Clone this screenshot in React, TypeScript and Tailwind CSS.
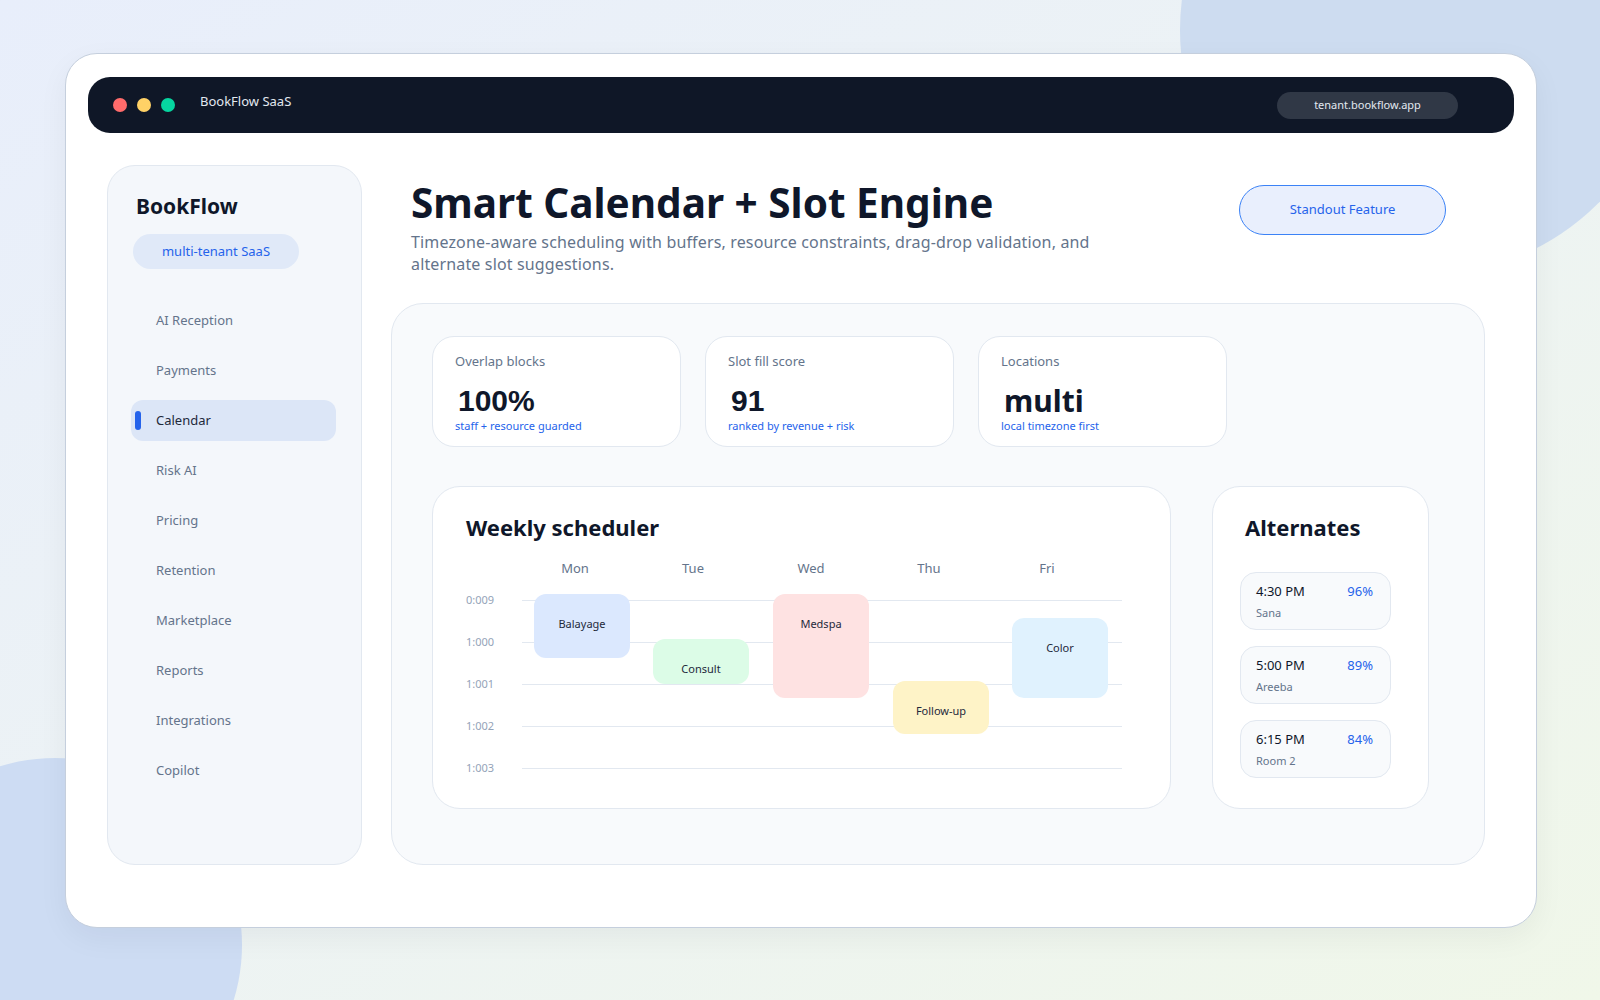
import React from 'react';

const navItems = [
  'AI Reception',
  'Payments',
  'Calendar',
  'Risk AI',
  'Pricing',
  'Retention',
  'Marketplace',
  'Reports',
  'Integrations',
  'Copilot',
];

const stats = [
  { label: 'Overlap blocks', value: '100%', note: 'staff + resource guarded', numeric: true },
  { label: 'Slot fill score', value: '91', note: 'ranked by revenue + risk', numeric: true },
  { label: 'Locations', value: 'multi', note: 'local timezone first', numeric: false },
];

const days = ['Mon', 'Tue', 'Wed', 'Thu', 'Fri'];
const hours = ['0:009', '1:000', '1:001', '1:002', '1:003'];

// event blocks sit on the grid canvas, offsets in px from the first column / first row
const events = [
  { name: 'Balayage', left: 12, top: 15, height: 64, color: 'bg-[#dbe8fe]' },
  { name: 'Consult', left: 131, top: 60, height: 45, color: 'bg-[#dcfce7]' },
  { name: 'Medspa', left: 251, top: 15, height: 104, color: 'bg-[#fee2e2]' },
  { name: 'Follow-up', left: 371, top: 102, height: 53, color: 'bg-[#fef3c7]' },
  { name: 'Color', left: 490, top: 39, height: 80, color: 'bg-[#e0f2fe]' },
];

const alternates = [
  { time: '4:30 PM', score: '96%', who: 'Sana' },
  { time: '5:00 PM', score: '89%', who: 'Areeba' },
  { time: '6:15 PM', score: '84%', who: 'Room 2' },
];

const Sidebar = () => (
  <aside className="w-[255px] shrink-0 rounded-[28px] border border-[#e2e8f0] bg-[#f4f7fb] pt-[26px] px-[23px]">
    <p className="pl-[5px] text-[21px] leading-[28px] font-bold text-[#0f172a]">BookFlow</p>
    <div className="mt-[14px] ml-[2px] flex h-[35px] w-[166px] items-center justify-center rounded-full bg-[#e0e9f8] text-[13px] text-[#2563eb]">
      multi-tenant SaaS
    </div>
    <nav className="mt-[31px] flex flex-col gap-[9px]">
      {navItems.map((item) => {
        const active = item === 'Calendar';
        return (
          <div
            key={item}
            className={`relative flex h-[41px] w-[205px] items-center rounded-[12px] pl-[25px] text-[13px] ${
              active ? 'bg-[#dce6f7] text-[#1e293b]' : 'text-[#64748b]'
            }`}
          >
            {active && <span className="absolute left-[4px] top-[11px] h-[19px] w-[6px] rounded-full bg-[#2563eb]" />}
            {item}
          </div>
        );
      })}
    </nav>
  </aside>
);

const StatCard = ({ label, value, note, numeric }: (typeof stats)[number]) => (
  <div className="h-[111px] w-[249px] rounded-[22px] border border-[#e2e8f0] bg-white px-[22px] pt-[15px]">
    <p className="text-[13px] leading-[18px] text-[#64748b]">{label}</p>
    <p
      className={`mt-[15px] ml-[3px] text-[30px] leading-[32px] font-bold text-[#0f172a] ${
        numeric ? "font-['Liberation_Sans',sans-serif]" : ''
      }`}
    >
      {value}
    </p>
    <p className="mt-[2px] text-[11px] leading-[14px] text-[#2563eb]">{note}</p>
  </div>
);

const WeeklyScheduler = () => (
  <div className="h-[323px] w-[739px] rounded-[28px] border border-[#e2e8f0] bg-white pt-[26px] pl-[33px]">
    <h3 className="text-[22px] leading-[28px] font-bold text-[#0f172a]">Weekly scheduler</h3>
    <div className="mt-[18px] ml-[50px] flex">
      {days.map((d) => (
        <span key={d} className="w-[118px] text-center text-[13px] leading-[18px] text-[#64748b]">
          {d}
        </span>
      ))}
    </div>
    <div className="relative mt-[2px]">
      {hours.map((h) => (
        <div key={h} className="flex h-[42px] items-center">
          <span className="w-[56px] text-[11px] text-[#94a3b8]">{h}</span>
          <div className="h-px w-[600px] bg-[#e2e8f0]" />
        </div>
      ))}
      <div className="absolute left-[56px] top-0">
        {events.map((e) => (
          <div
            key={e.name}
            className={`absolute w-[96px] rounded-[12px] pt-[22px] text-center text-[11px] leading-[16px] text-[#1e293b] ${e.color}`}
            style={{ left: e.left, top: e.top, height: e.height }}
          >
            {e.name}
          </div>
        ))}
      </div>
    </div>
  </div>
);

const Alternates = () => (
  <div className="h-[323px] w-[217px] rounded-[28px] border border-[#e2e8f0] bg-white pt-[26px] px-[27px]">
    <h3 className="pl-[5px] text-[22px] leading-[28px] font-bold text-[#0f172a]">Alternates</h3>
    <div className="mt-[31px] flex flex-col gap-[16px]">
      {alternates.map((a) => (
        <div key={a.time} className="h-[58px] w-[151px] rounded-[16px] border border-[#e2e8f0] bg-[#f8fafc] pt-[9px] pl-[15px] pr-[17px]">
          <div className="flex items-center justify-between text-[13px] leading-[18px]">
            <span className="text-[#0f172a]">{a.time}</span>
            <span className="text-[#2563eb]">{a.score}</span>
          </div>
          <p className="mt-[6px] text-[11px] leading-[14px] text-[#64748b]">{a.who}</p>
        </div>
      ))}
    </div>
  </div>
);

export default function App() {
  return (
    <div className="relative h-[1000px] w-full overflow-hidden bg-linear-to-br from-[#e8eefb] via-[#edf3f4] to-[#f0f7e9] font-['Noto_Sans',sans-serif]">
      {/* soft background blobs */}
      <div className="absolute left-[1180px] top-[-215px] h-[490px] w-[490px] rounded-full bg-[#cddcf0]" />
      <div className="absolute left-[-132px] top-[758px] h-[374px] w-[374px] rounded-full bg-[#cddcf3]" />

      <div className="relative pl-[65px] pt-[53px]">
        <div className="h-[875px] w-[1472px] rounded-[32px] border border-[#c5cfdd] bg-white px-[22px] pt-[23px] shadow-[0_10px_30px_rgba(15,23,42,0.05)]">
          {/* window chrome */}
          <div className="flex h-[56px] items-center justify-between rounded-[22px] bg-[#0f1727] pl-[25px] pr-[56px]">
            <div className="flex items-center">
              <span className="h-[14px] w-[14px] rounded-full bg-[#ff6b6b]" />
              <span className="ml-[10px] h-[14px] w-[14px] rounded-full bg-[#ffd166]" />
              <span className="ml-[10px] h-[14px] w-[14px] rounded-full bg-[#06d6a0]" />
              <span className="mb-[6px] ml-[25px] text-[13px] text-[#e2e8f0]">BookFlow SaaS</span>
            </div>
            <div className="flex h-[27px] w-[181px] items-center justify-center rounded-full bg-[#303846] text-[11px] text-[#e2e8f0]">
              tenant.bookflow.app
            </div>
          </div>

          <div className="mt-[32px] flex h-[700px] gap-[29px] pl-[19px] pr-[29px]">
            <Sidebar />

            <main className="flex flex-1 flex-col">
              <header className="flex h-[138px] justify-between pl-[20px] pr-[39px] pt-[15px]">
                <div>
                  <h1 className="text-[40.5px] leading-[46px] font-bold text-[#0f172a]">Smart Calendar + Slot Engine</h1>
                  <p className="mt-[5px] max-w-[690px] text-[16px] leading-[22px] tracking-[0.15px] text-[#64748b]">
                    Timezone-aware scheduling with buffers, resource constraints, drag-drop validation, and alternate slot suggestions.
                  </p>
                </div>
                <button className="mt-[5px] flex h-[50px] w-[207px] shrink-0 items-center justify-center rounded-full border border-[#3b82f6] bg-[#e9effd] text-[13px] text-[#2563eb]">
                  Standout Feature
                </button>
              </header>

              <section className="flex-1 rounded-[32px] border border-[#e2e8f0] bg-[#f8fafc] pl-[40px] pt-[32px]">
                <div className="flex gap-[24px]">
                  {stats.map((s) => (
                    <StatCard key={s.label} {...s} />
                  ))}
                </div>
                <div className="mt-[39px] flex gap-[41px]">
                  <WeeklyScheduler />
                  <Alternates />
                </div>
              </section>
            </main>
          </div>
        </div>
      </div>
    </div>
  );
}
